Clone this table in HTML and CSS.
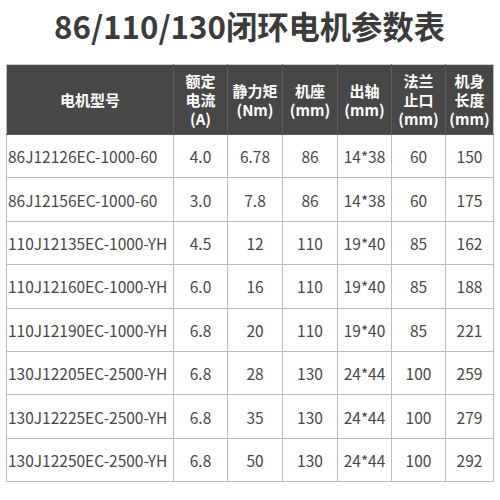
FILE: index.html
```html
<!DOCTYPE html>
<html lang="zh">
<head>
<meta charset="utf-8">
<link rel="stylesheet" href="styles.css">
</head>
<body>
<div class="page">
  <h1 class="title">86/110/130闭环电机参数表</h1>
  <table class="spec">
    <colgroup>
      <col class="c-model"><col class="c-a"><col class="c-b"><col class="c-c"><col class="c-d"><col class="c-e"><col class="c-f">
    </colgroup>
    <thead>
      <tr>
        <th>电机型号</th>
        <th>额定<br>电流<br>(A)</th>
        <th>静力矩<br>(Nm)</th>
        <th>机座<br>(mm)</th>
        <th>出轴<br>(mm)</th>
        <th>法兰<br>止口<br>(mm)</th>
        <th>机身<br>长度<br>(mm)</th>
      </tr>
    </thead>
    <tbody>
      <tr><td class="model">86J12126EC-1000-60</td><td>4.0</td><td>6.78</td><td>86</td><td>14*38</td><td>60</td><td>150</td></tr>
      <tr><td class="model">86J12156EC-1000-60</td><td>3.0</td><td>7.8</td><td>86</td><td>14*38</td><td>60</td><td>175</td></tr>
      <tr><td class="model">110J12135EC-1000-YH</td><td>4.5</td><td>12</td><td>110</td><td>19*40</td><td>85</td><td>162</td></tr>
      <tr><td class="model">110J12160EC-1000-YH</td><td>6.0</td><td>16</td><td>110</td><td>19*40</td><td>85</td><td>188</td></tr>
      <tr><td class="model">110J12190EC-1000-YH</td><td>6.8</td><td>20</td><td>110</td><td>19*40</td><td>85</td><td>221</td></tr>
      <tr><td class="model">130J12205EC-2500-YH</td><td>6.8</td><td>28</td><td>130</td><td>24*44</td><td>100</td><td>259</td></tr>
      <tr><td class="model">130J12225EC-2500-YH</td><td>6.8</td><td>35</td><td>130</td><td>24*44</td><td>100</td><td>279</td></tr>
      <tr><td class="model">130J12250EC-2500-YH</td><td>6.8</td><td>50</td><td>130</td><td>24*44</td><td>100</td><td>292</td></tr>
    </tbody>
  </table>
</div>
</body>
</html>
```
FILE: styles.css
```css
html, body {
  margin: 0;
  padding: 0;
  background: #ffffff;
}
.page {
  width: 500px;
  height: 500px;
  padding: 0 0 0 6px;
  box-sizing: border-box;
  font-family: "Noto Sans CJK SC", "Noto Sans", sans-serif;
}
.title {
  margin: 0;
  height: 64px;
  padding-top: 4px;
  box-sizing: border-box;
  width: 487px;
  text-align: center;
  font-size: 31.3px;
  line-height: 44px;
  font-weight: 700;
  color: #3b3b3b;
}
.spec {
  width: 487px;
  table-layout: fixed;
  border-collapse: collapse;
  color: #474747;
}
.c-model { width: 167px; }
.c-a { width: 54px; }
.c-b { width: 55px; }
.c-c { width: 55px; }
.c-d { width: 54px; }
.c-e { width: 54px; }
.c-f { width: 48px; }
.spec th {
  background: #474747;
  color: #ffffff;
  font-weight: 700;
  font-size: 15px;
  line-height: 19px;
  height: 69px;
  padding: 0;
  border: 1px solid #5e5e5e;
  border-top-color: #cfcfcf;
  text-align: center;
  vertical-align: middle;
}
.spec th:first-child { border-left-color: #bdbdbd; }
.spec th:last-child { border-right-color: #bdbdbd; }
.spec td {
  height: 42.4px;
  padding: 0;
  font-size: 15.5px;
  border: 1px solid #bdbdbd;
  text-align: center;
  vertical-align: middle;
  white-space: nowrap;
}
.spec td.model {
  text-align: left;
  padding-left: 1px;
}
```
